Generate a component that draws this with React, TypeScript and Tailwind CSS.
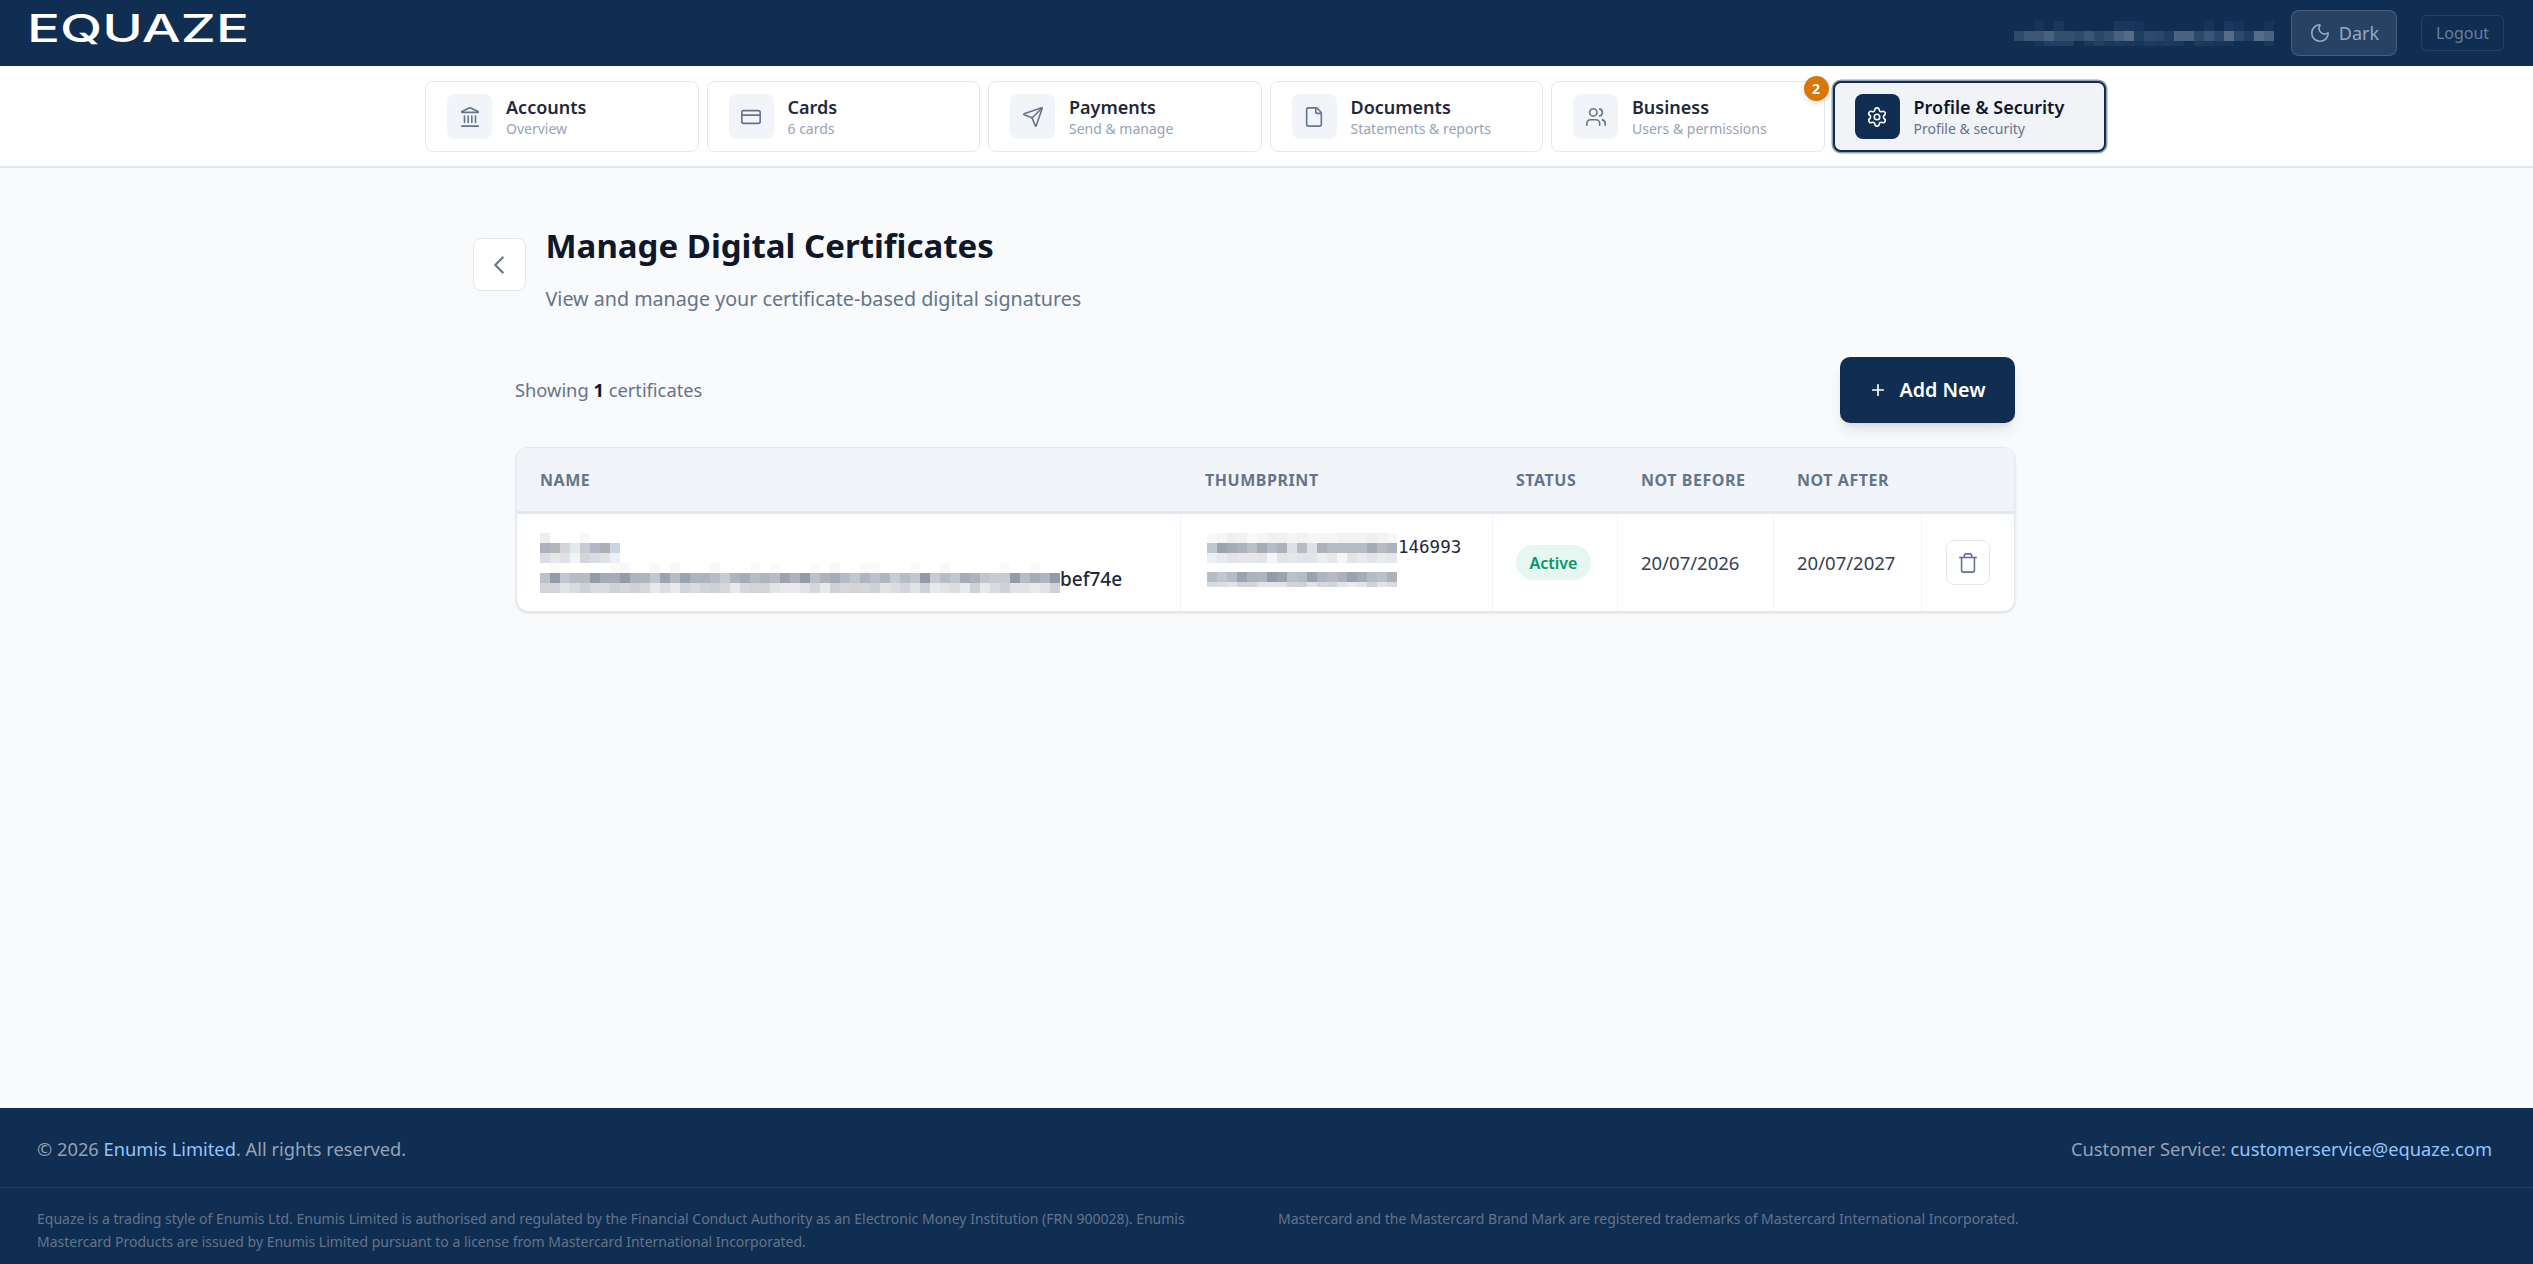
import { Landmark, CreditCard, Send, File, Users, Settings, Moon, Trash, ChevronLeft, Plus } from "lucide-react";

function seq(seed: number, n: number, palette: string[]) {
  const out: string[] = [];
  let s = seed;
  for (let i = 0; i < n; i++) {
    s = (s * 1103515245 + 12345) & 0x7fffffff;
    out.push(palette[(s >> 12) % palette.length]);
  }
  return out;
}

const darkP = ["#aeb2bc", "#9aa3b0", "#b4bcc6", "#c2c6cf", "#b8bcc2", "#a5acb8", "#c8ccd2", "#939ba9", "#bcc0c8", "#adb5c0"];
const lightP = ["#d6d7da", "#dadee4", "#d8dbe0", "#e2e3e6", "#d3d4d8", "#e0e4e8", "#cdd2d8", "#e8e9ec", "#d2d6dc"];
const faintP = ["#ffffff", "#ffffff", "#ffffff", "#ffffff", "#fafafa", "#ffffff", "#f8f8f9"];
const thumbFaint = ["#f2f2f3", "#f5f5f6", "#f0f1f2", "#f8f8f8", "#eeeff1", "#f6f6f7"];
const navyFaint = ["#102d52", "#102d52", "#16345a", "#1a385d", "#102d52"];
const navyBright = ["#2d4a6c", "#3c5675", "#2a4869", "#4a6280", "#1f3e62", "#34506f", "#566c87"];
const navyMid = ["#18365a", "#1d3b5e", "#102d52", "#214062", "#1a385c"];

function Mosaic({ rows, cell = 10, heights }: { rows: string[][]; cell?: number; heights?: number[] }) {
  return (
    <div className="flex flex-col shrink-0">
      {rows.map((row, r) => (
        <div key={r} className="flex">
          {row.map((c, i) => (
            <div key={i} style={{ width: cell, height: heights ? heights[r] : cell, background: c }} />
          ))}
        </div>
      ))}
    </div>
  );
}

const name1 = [
  ["#eeeef0", "#ffffff", "#ffffff", "#ffffff", "#f8f8f9", "#ffffff", "#ffffff", "#ffffff"],
  ["#aeb2be", "#b4b4bc", "#d3d5da", "#e2ebea", "#c8cad4", "#b2b7c4", "#adafb6", "#c8d6e0"],
  ["#d9dce3", "#e7e7e9", "#e0e1e6", "#f2f5f6", "#d4d5d9", "#d9dde3", "#e0e1e4", "#edeff3"],
];
const name2 = [seq(3, 52, faintP), seq(17, 52, darkP), seq(29, 52, lightP)];
const thumb1 = [seq(5, 19, thumbFaint), seq(41, 19, [...darkP, "#dde1e6", "#d4d4d6"]), seq(43, 19, ["#e6e7ea", "#eceef0", "#e2e4e7", "#f4f5f6", "#e8eaed"])];
const thumb2 = [seq(51, 19, darkP), seq(61, 19, lightP)];
const userMosaic = [seq(7, 26, navyFaint), seq(11, 26, navyBright), seq(13, 26, navyMid)];

const tabs = [
  { icon: Landmark, title: "Accounts", sub: "Overview" },
  { icon: CreditCard, title: "Cards", sub: "6 cards" },
  { icon: Send, title: "Payments", sub: "Send & manage" },
  { icon: File, title: "Documents", sub: "Statements & reports" },
  { icon: Users, title: "Business", sub: "Users & permissions", badge: "2" },
  { icon: Settings, title: "Profile & Security", sub: "Profile & security", active: true },
];

const heads = ["Name", "Thumbprint", "Status", "Not Before", "Not After", ""];

export default function App() {
  return (
    <div className="min-h-screen flex flex-col bg-[#f8fafc] font-['Noto_Sans',sans-serif] text-[#1e293b]">
      <header className="h-[66px] bg-[#102d52] flex items-center justify-between pl-[26px] pr-[29px]">
        <svg width="226" height="44" viewBox="0 0 226 44" className="overflow-visible" role="img" aria-label="EQUAZE">
          <text x="1" y="31" textLength="222" lengthAdjust="spacingAndGlyphs" fill="#ffffff" fontFamily="Inter, sans-serif" fontSize="38" fontWeight="500">
            EQUAZE
          </text>
        </svg>
        <div className="flex items-center">
          <Mosaic rows={userMosaic} heights={[10, 10, 5]} />
          <button className="ml-[17px] w-[106px] h-[46px] rounded-lg bg-white/10 border border-white/15 flex items-center justify-center gap-2 text-[#94a9c2] text-[18px]">
            <Moon size={22} strokeWidth={1.75} />
            Dark
          </button>
          <button className="ml-6 w-[83px] h-9 rounded-md border border-white/10 text-[#64809f] text-[16px]">Logout</button>
        </div>
      </header>

      <nav className="bg-white border-b-2 border-[#e2e8f0] h-[102px] pt-[15px] pr-[2px]">
        <div className="w-[1681px] mx-auto grid grid-cols-6 gap-2">
          {tabs.map((t) => {
            const Icon = t.icon;
            return (
              <div
                key={t.title}
                className={
                  t.active
                    ? "relative h-[71px] rounded-lg bg-[#f1f3f6] border-2 border-[#102d52] shadow-[0_0_0_1.5px_rgba(16,45,82,0.45)] flex items-center pl-[20px] gap-[14px]"
                    : "relative h-[71px] rounded-lg bg-white border border-[#e5e8f0] flex items-center pl-[21px] gap-[14px]"
                }
              >
                <div className={t.active ? "w-[45px] h-[45px] rounded-lg bg-[#102d52] text-white flex items-center justify-center" : "w-[45px] h-[45px] rounded-lg bg-[#f1f5f9] text-[#64748b] flex items-center justify-center"}>
                  <Icon size={22} strokeWidth={1.75} />
                </div>
                <div className="mt-[-1px]">
                  <div className={t.active ? "text-[18px] leading-[24px] font-semibold text-[#0f172a]" : "text-[18px] leading-[24px] font-semibold text-[#1e293b]"}>{t.title}</div>
                  <div className={t.active ? "text-[14px] leading-[18px] mt-[1px] text-[#64748b]" : "text-[14px] leading-[18px] mt-[1px] text-[#94a3b8]"}>{t.sub}</div>
                </div>
                {t.badge && (
                  <span className="absolute top-[-6px] right-[-5px] w-[25px] h-[25px] rounded-full bg-[#d97706] text-white text-[14px] font-bold flex items-center justify-center shadow-md">
                    {t.badge}
                  </span>
                )}
              </div>
            );
          })}
        </div>
      </nav>

      <main className="flex-1 pr-[2px] pt-[58px]">
        <div className="w-[1586px] mx-auto">
          <div className="flex items-start gap-[20px]">
            <button className="mt-[12px] w-[53px] h-[53px] rounded-lg bg-white border border-[#e2e8f0] flex items-center justify-center text-[#64748b]">
              <ChevronLeft size={30} strokeWidth={1.75} />
            </button>
            <div>
              <h1 className="text-[33px] leading-[40px] font-bold text-[#0f172a]">Manage Digital Certificates</h1>
              <p className="mt-[19px] text-[19.7px] leading-[28px] text-[#64748b]">View and manage your certificate-based digital signatures</p>
            </div>
          </div>
        </div>

        <div className="w-[1499px] mx-auto">
          <div className="mt-[44px] flex items-center justify-between">
            <p className="text-[18.3px] text-[#64748b] ml-[-1px]">
              Showing <strong className="font-bold text-[#0f172a]">1</strong> certificates
            </p>
            <button className="w-[175px] h-[66px] rounded-[10px] bg-[#102d52] text-white font-semibold text-[19.7px] flex items-center justify-center gap-[12px] shadow-lg">
              <Plus size={18} strokeWidth={2.25} />
              Add New
            </button>
          </div>

          <div className="mt-6 rounded-xl border border-[#e2e8f0] bg-white shadow-sm overflow-hidden">
            <div className="grid grid-cols-[664px_312px_125px_156px_148px_1fr] h-[66px] bg-[#f1f5f9] border-b-[3px] border-[#e2e8f0] items-center">
              {heads.map((h, i) => (
                <div key={h} className={i === 1 ? "pl-[24px] text-[16px] font-bold uppercase tracking-[0.55px] text-[#64748b]" : "pl-[23px] text-[16px] font-bold uppercase tracking-[0.55px] text-[#64748b]"}>{h}</div>
              ))}
            </div>
            <div className="grid grid-cols-[664px_312px_125px_156px_148px_1fr] h-[97px]">
              <div className="pl-[23px] border-r border-[#f1f5f9] flex flex-col justify-center">
                <div className="h-[30px]"><Mosaic rows={name1} /></div>
                <div className="h-[30px] flex items-center">
                  <Mosaic rows={name2} />
                  <span className="text-[19px] font-medium text-[#1e293b] mt-[3px]">bef74e</span>
                </div>
              </div>
              <div className="pl-[26px] border-r border-[#f1f5f9] flex flex-col justify-center">
                <div className="h-[30px] flex items-start">
                  <Mosaic rows={thumb1} />
                  <span className="font-['DejaVu_Sans_Mono',monospace] text-[17.5px] leading-[28px] text-[#1e293b] ml-[1px]">146993</span>
                </div>
                <div className="h-[30px] flex items-end pb-[6px]"><Mosaic rows={thumb2} heights={[10, 5]} /></div>
              </div>
              <div className="pl-[23px] border-r border-[#f1f5f9] flex items-center">
                <span className="w-[75px] h-[35px] rounded-full bg-[#e6f6f0] text-[#059669] text-[16px] font-semibold flex items-center justify-center">Active</span>
              </div>
              <div className="pl-[23px] border-r border-[#f1f5f9] flex items-center text-[18.5px] text-[#334155]">20/07/2026</div>
              <div className="pl-[23px] border-r border-[#f1f5f9] flex items-center text-[18.5px] text-[#334155]">20/07/2027</div>
              <div className="pl-6 flex items-center">
                <button className="w-[44px] h-[45px] rounded-lg bg-white border border-[#e2e8f0] text-[#64748b] flex items-center justify-center">
                  <Trash size={22} strokeWidth={1.75} />
                </button>
              </div>
            </div>
          </div>
        </div>
      </main>

      <footer className="bg-[#102d52]">
        <div className="h-[80px] pl-[37px] pr-[41px] pt-[3px] flex items-center justify-between border-b border-[#1a3f6e] text-[18.3px] text-[#94a3b8]">
          <p>
            © 2026 <span className="text-[#93c5fd]">Enumis Limited</span>. All rights reserved.
          </p>
          <p>
            Customer Service: <span className="text-[#93c5fd]">customerservice@equaze.com</span>
          </p>
        </div>
        <div className="pl-[37px] pr-[38px] pt-[19px] pb-[11px] grid grid-cols-2 gap-6 text-[14px] leading-[23px] text-[#64748b]">
          <p>
            Equaze is a trading style of Enumis Ltd. Enumis Limited is authorised and regulated by the Financial Conduct Authority as an Electronic Money Institution (FRN 900028). Enumis Mastercard Products are issued by Enumis Limited pursuant to a license from Mastercard International Incorporated.
          </p>
          <p>Mastercard and the Mastercard Brand Mark are registered trademarks of Mastercard International Incorporated.</p>
        </div>
      </footer>
    </div>
  );
}
